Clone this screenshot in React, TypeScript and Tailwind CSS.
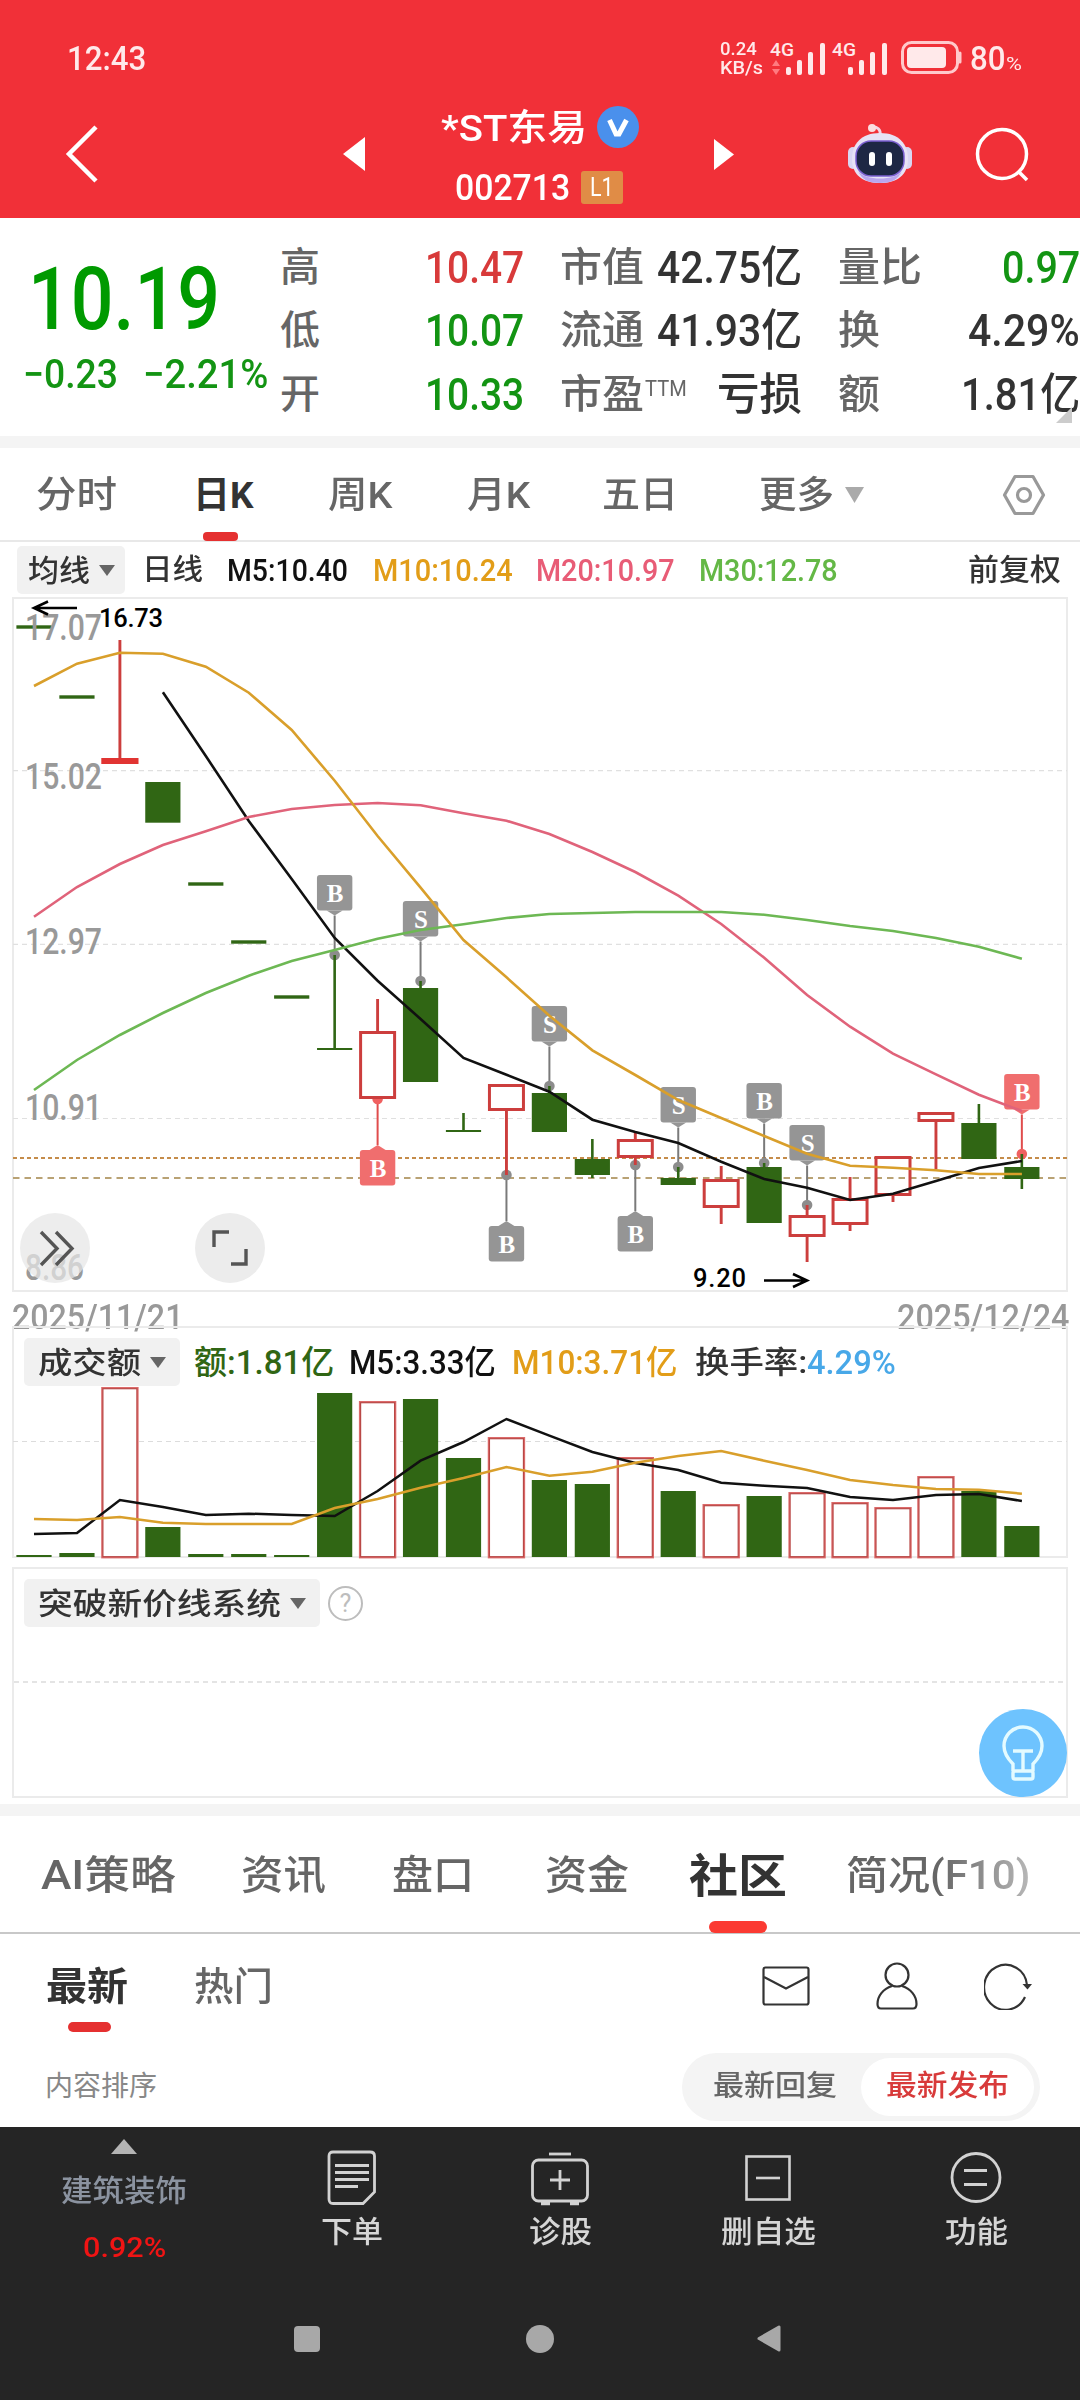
import React, { useLayoutEffect, useRef, useState } from "react";

/** Text squeezed or stretched horizontally so that it fills a fixed width. */
function Fit({ w, children, className = "" }: { w: number; children: React.ReactNode; className?: string }) {
  const ref = useRef<HTMLSpanElement>(null);
  const [k, setK] = useState(1);
  useLayoutEffect(() => {
    if (ref.current && ref.current.offsetWidth) setK(w / ref.current.offsetWidth);
  }, [w]);
  return (
    <span className={`block shrink-0 leading-none ${className}`} style={{ width: w }}>
      <span ref={ref} className="inline-block origin-left whitespace-nowrap leading-none align-top" style={{ transform: `scaleX(${k})` }}>
        {children}
      </span>
    </span>
  );
}

const X0 = 34;
const STEP = 42.95;
const xAt = (i: number) => X0 + i * STEP;
const line = (ys: number[], from = 0) => ys.map((y, i) => `${xAt(i + from).toFixed(1)},${y}`).join(" ");

// [wick top, body top, body bottom, wick bottom, kind]; kind: g = falling, r = rising, f = flat rising
const CANDLES: [number, number, number, number, string][] = [
  [627, 625.3, 628.7, 627, "g"],
  [697, 695.3, 698.7, 697, "g"],
  [640, 758, 764, 764, "f"],
  [782, 782, 822.7, 822, "g"],
  [884, 882.3, 885.7, 884, "g"],
  [942, 940.3, 943.7, 942, "g"],
  [997, 995.3, 998.7, 997, "g"],
  [955, 1048, 1050, 1050, "g"],
  [999, 1031, 1099, 1099, "r"],
  [981, 988, 1082, 1082, "g"],
  [1113, 1130, 1132, 1132, "g"],
  [1085, 1084, 1111, 1175, "r"],
  [1086, 1093, 1132, 1132, "g"],
  [1139, 1159, 1175, 1178, "g"],
  [1132, 1139, 1158, 1165, "r"],
  [1167, 1178, 1185, 1185, "g"],
  [1166, 1179, 1208, 1224, "r"],
  [1163, 1167, 1223, 1223, "g"],
  [1205, 1215, 1237, 1262, "r"],
  [1177, 1198, 1225, 1231, "r"],
  [1157, 1156, 1196, 1202, "r"],
  [1112, 1112, 1122, 1169, "r"],
  [1104, 1123, 1159, 1159, "g"],
  [1154, 1167, 1179, 1189, "g"],
];

const MA5 = [692.3, 756, 821, 879, 938, 980.7, 1019, 1058, 1074.7, 1091.7, 1119.7, 1132, 1143, 1161.7, 1179, 1187.7, 1200, 1193.7, 1181, 1168, 1161];
const MA10 = [686, 663.7, 652.7, 653.7, 666.7, 692.7, 730, 780.7, 836, 887.7, 940, 977.3, 1015.7, 1050.3, 1075, 1100, 1118, 1136, 1153.7, 1165.7, 1167.7, 1170.3, 1174, 1174];
const MA20 = [916.7, 887, 864, 845, 831.3, 817, 809, 805, 803, 805.3, 813.3, 820.7, 834, 852, 872, 895.7, 924, 957.7, 995, 1026.7, 1053.7, 1074.3, 1094.7, 1111];
const MA30 = [1090, 1060, 1035, 1013, 993, 975.7, 961, 950, 938.7, 930, 924.3, 918, 914, 913, 912, 912, 912, 914.7, 920, 926, 931, 938, 946.7, 958.7];

// [index, letter, box top, dot y, red]
const MARKS: [number, string, number, number, boolean][] = [
  [7, "B", 875, 955, false],
  [9, "S", 901, 981, false],
  [12, "S", 1006, 1086, false],
  [15, "S", 1087, 1167, false],
  [17, "B", 1083, 1163, false],
  [18, "S", 1125, 1205, false],
  [23, "B", 1074, 1154, true],
  [8, "B", 1150, 1099, true],
  [11, "B", 1226, 1175, false],
  [14, "B", 1216, 1165, false],
];

const VOL: [number, string][] = [
  [1555, "g"], [1553, "g"], [1388, "r"], [1527, "g"], [1554, "g"], [1554, "g"], [1555, "g"], [1393, "g"],
  [1402, "r"], [1399, "g"], [1458, "g"], [1438, "r"], [1480, "g"], [1484, "g"], [1458, "r"], [1491, "g"],
  [1505, "r"], [1496, "g"], [1493, "r"], [1503, "r"], [1508, "r"], [1477, "r"], [1491, "g"], [1526, "g"],
];
const VM5 = [1534, 1533, 1500, 1507, 1515, 1513.7, 1515, 1516, 1491, 1460.7, 1442, 1419, 1435.7, 1452, 1463, 1470, 1482.7, 1485.7, 1488, 1497, 1500, 1495, 1494, 1501];
const VM10 = [1519, 1520, 1517, 1522.7, 1524, 1524, 1524, 1508, 1499, 1487.7, 1478, 1467, 1475.7, 1471.7, 1462.7, 1456, 1451, 1460.7, 1470, 1480, 1485, 1489, 1489.7, 1493.7];

const GREEN = "#306614";
const RED = "#cc3e3d";

function AxisLabel({ y, w = 77, children }: { y: number; w?: number; children: string }) {
  return (
    <text x={25} y={y} fontSize={36} fill="#999" textLength={w} lengthAdjust="spacingAndGlyphs" className="font-medium">
      {children}
    </text>
  );
}

function PriceChart() {
  return (
    <svg width="1080" height="700" viewBox="0 595 1080 700" className="block">
      <path d="M13 1291V598H1067V1291Z" fill="none" stroke="#ebebeb" strokeWidth="2" />
      {[770.7, 944.3, 1118.5].map((y) => (
        <path key={y} d={`M13 ${y}H1067`} stroke="#e0e0e0" strokeWidth="1.2" strokeDasharray="5 4" />
      ))}
      <path d="M13 1158H1067" stroke="#c58c4a" strokeWidth="2" strokeDasharray="4 3" />
      <path d="M13 1178H1067" stroke="#b9a274" strokeWidth="2" strokeDasharray="6.5 5" />
      <AxisLabel y={1280} w={59}>8.86</AxisLabel>
      {MARKS.map(([i, ch, top, dot, red]) => {
        const x = xAt(i);
        const below = top > dot;
        const c = red ? "#f06e6e" : "#959595";
        const edge = below ? top : top + 35.5;
        const tip = below ? top - 5 : top + 40.5;
        return (
          <g key={i}>
            <path d={`M${x} ${tip}V${dot}`} stroke={red ? "#e04c4c" : "#7a7a7a"} strokeWidth="2" />
            <circle cx={x} cy={dot} r="5.3" fill={red ? "#f06060" : "#8c8c8c"} />
            <rect x={x - 17.7} y={top} width="35.4" height="35.5" rx="3" fill={c} />
            <path d={`M${x - 8} ${edge}L${x} ${tip}L${x + 8} ${edge}Z`} fill={c} />
            <text x={x + 0.5} y={top + 26.5} textAnchor="middle" fontSize="25" fill="#fff" className="font-['Liberation_Serif'] font-bold">
              {ch}
            </text>
          </g>
        );
      })}
      {CANDLES.map(([wt, bt, bb, wb, kind], i) => {
        const x = xAt(i);
        if (kind === "g")
          return (
            <g key={i} fill={GREEN}>
              <rect x={x - 1.3} y={wt} width="2.6" height={Math.max(0, wb - wt)} />
              <rect x={x - 17.6} y={bt} width="35.2" height={bb - bt} />
            </g>
          );
        return (
          <g key={i}>
            <path d={`M${x} ${wt}V${bt}M${x} ${bb}V${wb}`} stroke={RED} strokeWidth="2.9" />
            {kind === "f" ? (
              <rect x={x - 18.6} y={bt} width="37.2" height={bb - bt} fill="#e13432" />
            ) : (
              <rect x={x - 17} y={bt + 1.5} width="34" height={bb - bt - 3} fill={i === 20 ? "none" : "#fff"} stroke={RED} strokeWidth="3" />
            )}
          </g>
        );
      })}
      <g fill="none" strokeWidth="2.6">
        <polyline points={line(MA5, 3)} stroke="#111" />
        <polyline points={line(MA20)} stroke="#e0637a" />
        <polyline points={line(MA30)} stroke="#6db854" />
        <polyline points={line(MA10)} stroke="#d99f2b" />
      </g>
      <AxisLabel y={640}>17.07</AxisLabel>
      <AxisLabel y={789}>15.02</AxisLabel>
      <AxisLabel y={954}>12.97</AxisLabel>
      <AxisLabel y={1120}>10.91</AxisLabel>
      <g fill="none" stroke="#000" strokeWidth="2.6">
        <path d="M77 608H34M48 601.5L34 608L48 614.5" />
        <path d="M764 1280.500H807M793 1274L807 1280.500L793 1287" />
      </g>
      <g fontSize="25.500" fill="#000" className="font-medium">
        <text x="99" y="626.500" textLength="64">16.73</text>
        <text x="693" y="1287" textLength="53">9.20</text>
      </g>
      <circle cx="55" cy="1248" r="35" fill="#e6e6e6" fillOpacity="0.72" />
      <circle cx="230" cy="1248" r="35" fill="#ececec" />
      <g fill="none" stroke="#555" strokeWidth="3.4">
        <path d="M41 1232L57 1248.500L41 1265M56 1232L72 1248.500L56 1265" />
        <path d="M229 1232H214V1247M231 1264H246V1249" />
      </g>
    </svg>
  );
}

function VolumeChart() {
  return (
    <svg width="1080" height="234" viewBox="0 1326 1080 234" className="col-start-1 row-start-1 block">
      <path d="M13 1557V1327H1067V1557Z" fill="none" stroke="#ebebeb" strokeWidth="2" />
      <path d="M13 1441.500H1067" stroke="#dcdcdc" strokeWidth="1.2" strokeDasharray="5 4" />
      {VOL.map(([top, kind], i) =>
        kind === "g" ? (
          <rect key={i} x={xAt(i) - 17.6} y={top} width="35.2" height={1557 - top} fill={GREEN} />
        ) : (
          <g key={i} fill="#fff">
            <rect x={xAt(i) - 17} y={top + 0.7} width="34" height={1556 - top} stroke="#dc6a6a" strokeWidth="3.400" />
            <rect x={xAt(i) - 17} y={top + 0.7} width="34" height={1556 - top} stroke="#b94846" strokeWidth="1.2" />
          </g>
        ),
      )}
      <g fill="none" strokeWidth="2.5">
        <polyline points={line(VM5)} stroke="#111" />
        <polyline points={line(VM10)} stroke="#d99f2b" />
      </g>
    </svg>
  );
}

function Down({ className = "text-[#666]", w = 16, h = 11 }: { className?: string; w?: number; h?: number }) {
  return (
    <svg width={w} height={h} viewBox="0 0 16 11" preserveAspectRatio="none" className={`shrink-0 ${className}`}>
      <path d="M0 0H16L8 11Z" fill="currentColor" />
    </svg>
  );
}

function Signal({ arrows = false }: { arrows?: boolean }) {
  return (
    <svg width="62" height="36" viewBox="0 0 62 36" className="shrink-0" fill="#ffe9ea">
      <text x="4" y="16" fontSize="19" textLength="24" lengthAdjust="spacingAndGlyphs" className="font-medium">4G</text>
      {arrows && <path d="M6 26L10 20L14 26ZM6 29H14L10 35Z" fill="#ff7b80" />}
      <rect x="20" y="27" width="5" height="8" rx="2" />
      <rect x="31" y="20" width="5" height="15" rx="2" />
      <rect x="42" y="12" width="5" height="23" rx="2" />
      <rect x="54" y="3" width="5" height="32" rx="2" />
    </svg>
  );
}

function Header() {
  return (
    <header className="h-[218px] bg-[#f13038] text-white">
      <div className="flex h-[90px] items-center pt-[26px] text-[#ffe9ea]">
        <Fit w={79} className="ml-[67px] text-[34px] font-medium">12:43</Fit>
        <div className="ml-[574px] flex flex-col gap-px">
          <Fit w={37} className="text-[18px] font-medium">0.24</Fit>
          <Fit w={43} className="text-[18px] font-medium">KB/s</Fit>
        </div>
        <div className="ml-[3px] flex"><Signal arrows /><Signal /></div>
        <svg width="62" height="34" viewBox="0 0 62 34" className="ml-[11px] shrink-0">
          <rect x="1.500" y="1.500" width="55" height="30" rx="9" fill="none" stroke="#ffc9cb" strokeWidth="3" />
          <rect x="6" y="6" width="39" height="21" rx="4" fill="#ffe9ea" />
          <path d="M59 12V21" stroke="#ffc9cb" strokeWidth="3" strokeLinecap="round" />
        </svg>
        <Fit w={36} className="ml-[7px] text-[33px] font-medium">80</Fit>
        <Fit w={16} className="mt-[10px] text-[19px]">%</Fit>
      </div>
      <div className="flex h-[128px] items-center">
        <svg width="34" height="60" viewBox="0 0 34 60" className="ml-[65px] shrink-0">
          <path d="M31 3L4 30L31 57" fill="none" stroke="#fff" strokeWidth="4.500" />
        </svg>
        <svg width="22" height="34" viewBox="0 0 22 34" className="ml-[244px] shrink-0">
          <path d="M22 0V34L0 17Z" fill="#fff" />
        </svg>
        <div className="ml-[76px] flex w-[200px] shrink-0 flex-col pt-[6px]">
          <div className="flex h-[60px] items-center">
            <Fit w={146} className="mt-[2px] text-[37px] font-medium">*ST东易</Fit>
            <svg width="42" height="42" viewBox="0 0 42 42" className="ml-[10px] shrink-0">
              <circle cx="21" cy="21" r="21" fill="#4a90ec" />
              <path d="M12.500 14L19 28H22L29.500 14" fill="none" stroke="#fff" strokeWidth="5" />
            </svg>
          </div>
          <div className="flex h-[60px] items-center pl-[14px]">
            <Fit w={115} className="mt-px text-[37px] font-medium">002713</Fit>
            <div className="ml-[11px] flex h-[33px] w-[42px] items-center justify-center rounded-[3px] bg-[#e08c46]">
              <Fit w={24} className="text-[25px]">L1</Fit>
            </div>
          </div>
        </div>
        <svg width="20" height="31" viewBox="0 0 20 31" className="ml-[73px] shrink-0">
          <path d="M0 0L20 15.500L0 31Z" fill="#fff" />
        </svg>
        <svg width="66" height="62" viewBox="0 0 66 62" className="ml-[113px] shrink-0">
          <path d="M33 12C34 6 30 4 26 4" fill="none" stroke="#f3d5e6" strokeWidth="3" />
          <circle cx="25" cy="5" r="4" fill="#fbdde0" />
          <rect x="1" y="24" width="10" height="22" rx="5" fill="#d9d6f2" />
          <rect x="55" y="24" width="10" height="22" rx="5" fill="#d9d6f2" />
          <path d="M33 10C52 10 61 21 61 36C61 52 50 60 33 60S5 52 5 36C5 21 14 10 33 10Z" fill="#e7e2f5" />
          <path d="M11 48C18 58 48 58 55 48C51 57 44 60 33 60S15 57 11 48Z" fill="#b9a6ee" />
          <rect x="9" y="18" width="48" height="35" rx="15" fill="#1d2744" stroke="#7a5fd0" strokeWidth="1.500" />
          <rect x="22" y="29" width="6" height="14" rx="3" fill="#fff" />
          <rect x="39" y="29" width="6" height="14" rx="3" fill="#fff" />
        </svg>
        <svg width="56" height="56" viewBox="0 0 56 56" className="ml-[61px] shrink-0">
          <circle cx="28" cy="28" r="24.500" fill="none" stroke="#fff" strokeWidth="3.500" />
          <path d="M44 45L53 54" stroke="#fff" strokeWidth="3.500" />
        </svg>
      </div>
    </header>
  );
}

const QUOTE_ROWS = [
  { a: "高", av: "10.47", ac: "text-[#d83a3a]", b: "市值", bv: "42.75亿", bw: 145, c: "量比", cv: "0.97", cw: 78, cc: "text-[#139413]" },
  { a: "低", av: "10.07", ac: "text-[#139413]", b: "流通", bv: "41.93亿", bw: 145, c: "换", cv: "4.29%", cw: 112, cc: "text-[#333]" },
  { a: "开", av: "10.33", ac: "text-[#139413]", b: "市盈", bv: "亏损", bw: 85, c: "额", cv: "1.81亿", cw: 119, cc: "text-[#333]" },
];

function Quote() {
  return (
    <section className="relative flex h-[218px] overflow-hidden bg-white">
      <div className="w-[280px] shrink-0 text-[#009a00]">
        <Fit w={192} className="ml-[28px] mt-[38px] text-[87px] font-medium">10.19</Fit>
        <div className="mt-[12px] flex text-[#139413]">
          <Fit w={95} className="ml-[23px] text-[40px] font-medium">−0.23</Fit>
          <Fit w={125} className="ml-[25px] text-[40px] font-medium">−2.21%</Fit>
        </div>
      </div>
      <div className="flex w-[800px] shrink-0 flex-col pt-[18px]">
        {QUOTE_ROWS.map((r) => (
          <div key={r.a} className="flex h-[63.500px] items-center text-[44px] font-medium">
            <Fit w={40} className="text-[40px] text-[#666]">{r.a}</Fit>
            <Fit w={99} className={`ml-[105px] ${r.ac}`}>{r.av}</Fit>
            <div className="ml-[36px] flex w-[242px] shrink-0 items-center justify-between">
              <div className="flex">
                <Fit w={84} className="text-[40px] text-[#666]">{r.b}</Fit>
                {r.b === "市盈" && <Fit w={42} className="ml-px mt-[3px] text-[22px] font-normal text-[#666]">TTM</Fit>}
              </div>
              <Fit w={r.bw} className="text-[#333]">{r.bv}</Fit>
            </div>
            <Fit w={r.c.length * 42} className="ml-[36px] text-[40px] text-[#666]">{r.c}</Fit>
            <Fit w={r.cw} className={`ml-auto ${r.cc}`}>{r.cv}</Fit>
          </div>
        ))}
      </div>
      <svg width="16" height="16" className="absolute bottom-[13px] right-[8px]">
        <path d="M16 0V16H0Z" fill="#ccc" />
      </svg>
    </section>
  );
}

function PeriodTabs() {
  return (
    <nav className="flex h-[94px] items-center border-b-2 border-[#e8e8e8] bg-white pt-[2px] text-[37px] font-medium text-[#666]">
      <Fit w={81} className="ml-[36px]">分时</Fit>
      <div className="relative ml-[76px]">
        <Fit w={61} className="font-bold text-[#333]">日K</Fit>
        <span className="absolute left-[10px] top-[55px] h-[9px] w-[35px] rounded-[4px] bg-[#e53030]" />
      </div>
      <Fit w={64} className="ml-[74px]">周K</Fit>
      <Fit w={63} className="ml-[75px]">月K</Fit>
      <Fit w={76} className="ml-[72px]">五日</Fit>
      <Fit w={75} className="ml-[81px]">更多</Fit>
      <Down className="ml-[11px] text-[#aaa]" w={19} h={16} />
      <svg width="44" height="42" viewBox="0 0 44 42" className="ml-[138px] shrink-0" fill="none" stroke="#999" strokeWidth="3.200">
        <path d="M13 2.500H31L41.500 21L31 39.500H13L2.500 21Z" strokeLinejoin="round" />
        <circle cx="22" cy="21" r="6.500" />
      </svg>
    </nav>
  );
}

function Chip({ w, textW, label }: { w: string; textW: number; label: string }) {
  return (
    <div className={`flex h-[48px] shrink-0 items-center justify-center gap-[9px] rounded-[5px] bg-[#f1f1f1] ${w}`}>
      <Fit w={textW} className="mt-px text-[30px] font-medium text-[#333]">{label}</Fit>
      <Down />
    </div>
  );
}

function MailIcon() {
  return (
    <svg width="48" height="40" viewBox="0 0 48 40" className="shrink-0" fill="none" stroke="#333" strokeWidth="2.200">
      <rect x="1.500" y="1.500" width="45" height="37" rx="2" />
      <path d="M2 11L24 22.500L46 11" />
    </svg>
  );
}

function Community() {
  return (
    <section className="bg-white font-medium text-[#666]">
      <nav className="flex h-[118px] items-center border-b-2 border-[#c8c8c8] pt-[4px] text-[40px]">
        <Fit w={135} className="ml-[41px]">AI策略</Fit>
        <Fit w={85} className="ml-[65px]">资讯</Fit>
        <Fit w={82} className="ml-[66px]">盘口</Fit>
        <Fit w={84} className="ml-[71px]">资金</Fit>
        <div className="relative ml-[60px]">
          <Fit w={98} className="text-[46px] font-bold text-[#333]">社区</Fit>
          <span className="absolute left-[20px] top-[68px] h-[12px] w-[58px] rounded-[6px] bg-[#fb3a32]" />
        </div>
        <Fit w={184} className="ml-[59px] [mask-image:linear-gradient(to_right,#000_50%,#0007)]">简况(F10)</Fit>
      </nav>
      <div className="flex h-[103px] items-center text-[39px]">
        <div className="relative ml-[46px] pt-[3px]">
          <Fit w={82} className="font-bold text-[#333]">最新</Fit>
          <span className="absolute left-[22px] top-[57px] h-[10px] w-[43px] rounded-[5px] bg-[#e53030]" />
        </div>
        <Fit w={79} className="ml-[66px] pt-[3px]">热门</Fit>
        <div className="ml-[489px] flex items-center gap-[66px] pt-px">
          <MailIcon />
          <svg width="42" height="48" viewBox="0 0 42 48" className="shrink-0" fill="none" stroke="#333" strokeWidth="2.200">
            <circle cx="21" cy="13" r="11.500" />
            <path d="M16 24C7 27 1.500 34 1.500 42C1.500 45 2.500 46.500 5 46.500H37C39.500 46.500 40.500 45 40.500 42C40.500 34 35 27 26 24" />
          </svg>
          <svg width="48" height="48" viewBox="0 0 48 48" className="shrink-0" fill="none" stroke="#333" strokeWidth="2.200">
            <path d="M43 23A21.500 22.500 0 1 0 41 35" />
            <path d="M38.500 22H48L43.500 27.500Z" fill="#333" stroke="none" />
          </svg>
        </div>
      </div>
      <div className="flex h-[90px] items-center justify-between pl-[45px] pr-[40px] pt-[9px] text-[29px]">
        <Fit w={112} className="text-[28px] font-normal text-[#888]">内容排序</Fit>
        <div className="flex h-[68px] w-[358px] items-center rounded-full bg-[#f4f4f4]">
          <Fit w={124} className="ml-[31px]">最新回复</Fit>
          <div className="ml-[24px] flex h-[58px] w-[173px] items-center justify-center rounded-full bg-white">
            <Fit w={123} className="text-[#d83a3a]">最新发布</Fit>
          </div>
        </div>
      </div>
    </section>
  );
}

function BottomBar() {
  return (
    <footer className="h-[273px] bg-[#252525] text-[#d6d6d6]">
      <div className="flex h-[160px] text-[30px] font-medium">
        <div className="flex w-[248px] flex-col items-center pt-[12px]">
          <svg width="26" height="15"><path d="M13 0L26 15H0Z" fill="#b4b4b4" /></svg>
          <Fit w={126} className="mt-[22px] text-[#8b93a0]">建筑装饰</Fit>
          <Fit w={83} className="mt-[28px] text-[28px] text-[#f01414]">0.92%</Fit>
        </div>
        <div className="flex w-[208px] flex-col items-center">
          <svg width="50" height="56" viewBox="0 0 50 56" className="mt-[23px]" fill="none" stroke="#d2d2d2" strokeWidth="2.800">
            <path d="M6 2H43Q47.500 2 47.500 6V42L36 53.500H6Q2 53.500 2 49V6Q2 2 6 2Z" />
            <path d="M8 15.500H42M8 22.500H42M8 29.500H42M8 36.500H31" />
          </svg>
          <Fit w={62} className="mt-[11px]">下单</Fit>
        </div>
        <div className="flex w-[208px] flex-col items-center">
          <svg width="58" height="56" viewBox="0 0 58 56" className="mt-[23px]" fill="none" stroke="#d2d2d2" strokeWidth="2.800">
            <path d="M18 4H40" />
            <rect x="1.500" y="10" width="55" height="41" rx="6" />
            <path d="M29 20V40M19 30H39" />
            <path d="M10 53.500H19M39 53.500H48" strokeWidth="3.500" />
          </svg>
          <Fit w={63} className="mt-[11px]">诊股</Fit>
        </div>
        <div className="flex w-[208px] flex-col items-center">
          <svg width="46" height="56" viewBox="0 0 46 56" className="mt-[23px]" fill="none" stroke="#d2d2d2" strokeWidth="2.600">
            <rect x="1.500" y="6.500" width="43" height="43" />
            <path d="M11 28H35" />
          </svg>
          <Fit w={95} className="mt-[11px]">删自选</Fit>
        </div>
        <div className="flex w-[208px] flex-col items-center">
          <svg width="52" height="56" viewBox="0 0 52 56" className="mt-[23px]" fill="none" stroke="#d2d2d2" strokeWidth="2.800">
            <circle cx="26" cy="27.500" r="24" />
            <path d="M14 20.500H37M14 34.500H37" />
          </svg>
          <Fit w={63} className="mt-[11px]">功能</Fit>
        </div>
      </div>
      <div className="flex h-[103px] items-center">
        <span className="ml-[294px] h-[26px] w-[26px] rounded-[4px] bg-[#a8a8a8]" />
        <span className="ml-[206px] h-[28px] w-[28px] rounded-full bg-[#a8a8a8]" />
        <svg width="24" height="27" viewBox="0 0 24 27" className="ml-[203px]">
          <path d="M22 2V25L2 13.500Z" fill="#a8a8a8" stroke="#a8a8a8" strokeWidth="3" strokeLinejoin="round" />
        </svg>
      </div>
    </footer>
  );
}

export default function App() {
  return (
    <div className="h-[2400px] w-[1080px] overflow-hidden bg-white font-[Roboto,'Noto_Sans_CJK_SC',sans-serif]">
      <Header />
      <Quote />
      <div className="h-[12px] bg-[#f4f4f4]" />
      <PeriodTabs />
      <div className="flex h-[53px] items-center pt-[3px] text-[31px] font-medium">
        <div className="ml-[17px]"><Chip w="w-[108px]" textW={62} label="均线" /></div>
        <Fit w={61} className="ml-[17px] text-[29px] text-[#333]">日线</Fit>
        <Fit w={121} className="ml-[24px] text-[#111]">M5:10.40</Fit>
        <Fit w={140} className="ml-[25px] text-[#e29d18]">M10:10.24</Fit>
        <Fit w={139} className="ml-[23px] text-[#e85c76]">M20:10.97</Fit>
        <Fit w={139} className="ml-[24px] text-[#64b846]">M30:12.78</Fit>
        <Fit w={93} className="ml-auto mr-[19px] text-[30px] text-[#333]">前复权</Fit>
      </div>
      <PriceChart />
      <div className="-mb-[4px] flex h-[35px] items-start justify-between pl-[12px] pr-[11px] pt-[5px] text-[35px] font-medium text-[#999]">
        <Fit w={171}>2025/11/21</Fit>
        <Fit w={172}>2025/12/24</Fit>
      </div>
      <div className="relative grid h-[234px]">
        <VolumeChart />
        <div className="z-10 col-start-1 row-start-1 flex h-[60px] items-center self-start pt-[12px] text-[33px] font-medium">
          <div className="ml-[24px]"><Chip w="w-[156px]" textW={103} label="成交额" /></div>
          <Fit w={140} className="ml-[14px] text-[#306614]">额:1.81亿</Fit>
          <Fit w={147} className="ml-[15px] text-[#111]">M5:3.33亿</Fit>
          <Fit w={166} className="ml-[16px] text-[#e29d18]">M10:3.71亿</Fit>
          <Fit w={112} className="ml-[17px] text-[31px] text-[#333]">换手率:</Fit>
          <Fit w={89} className="text-[#48a8e8]">4.29%</Fit>
        </div>
      </div>
      <section className="relative ml-[12px] mt-[7px] h-[231px] w-[1056px] border-2 border-[#ebebeb]">
        <div className="flex items-center pl-[10px] pt-[10px]">
          <Chip w="w-[296px]" textW={243} label="突破新价线系统" />
          <div className="ml-[8px] flex h-[35px] w-[35px] items-center justify-center rounded-full border-[2.500px] border-[#bdbdbd] text-[25px] leading-none text-[#bdbdbd]">?</div>
        </div>
        <svg width="1052" height="2" className="mt-[54px] block">
          <path d="M0 1H1052" stroke="#dcdcdc" strokeWidth="1.500" strokeDasharray="5 4" />
        </svg>
        <svg width="88" height="88" viewBox="0 0 88 88" className="absolute -bottom-px -right-px" fill="none" stroke="#e4fbff" strokeWidth="3.400">
          <circle cx="44" cy="44" r="44" fill="#6ec3fe" stroke="none" />
          <path d="M34 62V55C29 50 25 45 25 37A19 19 0 0 1 63 37C63 45 59 50 54 55V62M34 42H54M44 42V62" />
          <rect x="34" y="62" width="20" height="8" rx="2" />
        </svg>
      </section>
      <div className="mt-[6px] h-[12px] bg-[#f4f4f4]" />
      <Community />
      <BottomBar />
    </div>
  );
}
